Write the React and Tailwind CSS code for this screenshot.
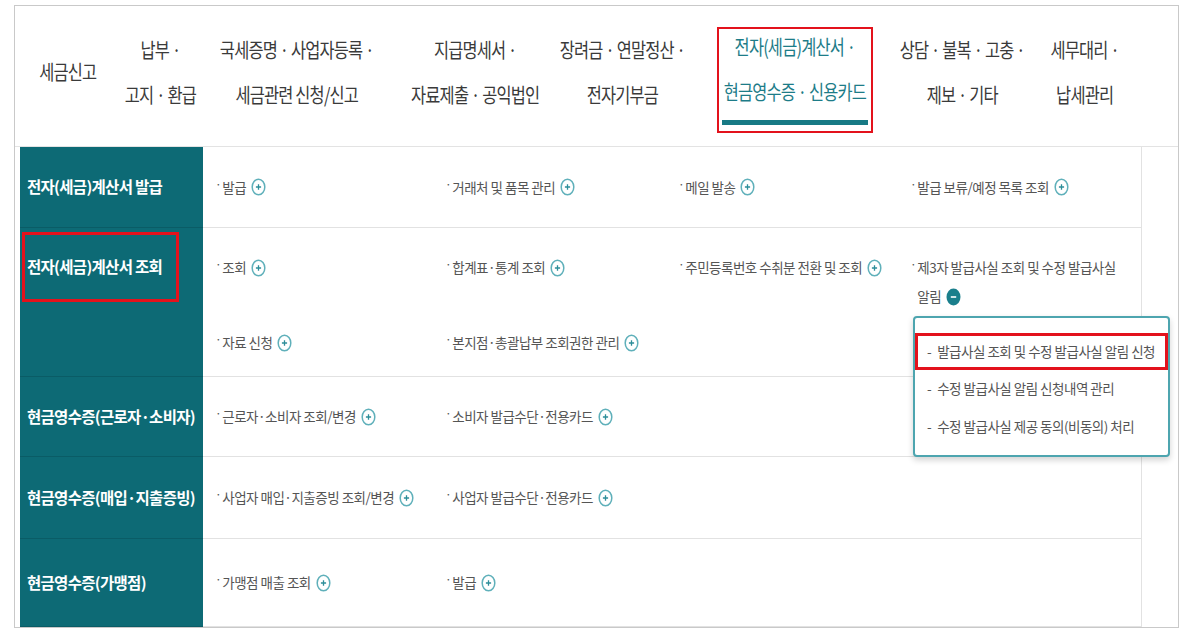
import React from "react";

const Plus = () => (
  <svg width="15" height="18" viewBox="0 0 15 18" className="ml-[5px] shrink-0">
    <ellipse cx="7.5" cy="9" rx="6.3" ry="7.8" fill="white" stroke="#5fb0ba" strokeWidth="1.5" />
    <path d="M7.5 6.2v5.6M4.9 9h5.2" stroke="#2c8d99" strokeWidth="1.3" />
  </svg>
);

const Minus = () => (
  <svg width="15" height="18" viewBox="0 0 15 18" className="ml-[5px] shrink-0">
    <ellipse cx="7.5" cy="9" rx="7" ry="8.5" fill="#1a7f8c" />
    <path d="M4.8 9h5.4" stroke="white" strokeWidth="1.6" />
  </svg>
);

const Item = ({ text }) => (
  <div className="flex items-center whitespace-nowrap text-[13.5px] leading-[29px] tracking-[-0.5px] text-[#555]">
    <span className="relative -top-[4px] mr-[1px] text-[12px]">·</span>
    <span>{text}</span>
    <Plus />
  </div>
);

const Label = ({ children }) => (
  <span className="whitespace-nowrap text-[15.5px] font-bold tracking-[-0.7px] text-white">{children}</span>
);

const headers = [
  { w: "w-[92px]", l: ["세금신고"] },
  { w: "w-[92px]", l: ["납부 ·", "고지 · 환급"] },
  { w: "w-[182px]", l: ["국세증명 · 사업자등록 ·", "세금관련 신청/신고"] },
  { w: "w-[174px]", l: ["지급명세서 ·", "자료제출 · 공익법인"] },
  { w: "w-[120px]", l: ["장려금 · 연말정산 ·", "전자기부금"] },
  { w: "w-[226px]", l: ["전자(세금)계산서 ·", "현금영수증 · 신용카드"], sel: true },
  { w: "w-[108px]", l: ["상담 · 불복 · 고충 ·", "제보 · 기타"] },
  { w: "w-[138px]", l: ["세무대리 ·", "납세관리"] },
];

const Row = ({ h, label, items }) => (
  <div className={`flex ${h}`}>
    <div className="flex w-[183px] items-center border-b border-[#0a5c66] bg-[#0d6a75] pl-[7px]">
      <Label>{label}</Label>
    </div>
    <div className="grid w-[939px] grid-cols-[230px_233px_232px_1fr] items-center border-b border-r border-[#e2e2e2] pl-[12px]">
      {items.map((t) => (
        <Item key={t} text={t} />
      ))}
    </div>
  </div>
);

export default function App() {
  return (
    <div className="h-[637px] w-[1188px] overflow-hidden bg-white font-['Noto_Sans_CJK_KR','Noto_Sans',sans-serif]">
      <div className="relative ml-[14px] mt-[5px] h-[623px] w-[1165px] border border-[#c9c9c9]">
        {/* header */}
        <div className="flex h-[141px] border-b border-[#e3e3e3] pl-[7px]">
          {headers.map((c, i) =>
            c.sel ? (
              <div key={i} className={`${c.w} flex justify-center pt-[21px]`}>
                <div className="flex h-[106px] w-[156px] flex-col items-center border-2 border-[#e3121c] pt-[5px]">
                  <div className="flex scale-x-[0.82] flex-col items-center gap-[20px] whitespace-nowrap text-[20px] leading-[25px] tracking-[-1px] text-[#1d7c88]">
                    <span>{c.l[0]}</span>
                    <span>{c.l[1]}</span>
                  </div>
                  <div className="mt-[16px] h-[5px] w-[146px] bg-[#177a85]" />
                </div>
              </div>
            ) : (
              <div key={i} className={`${c.w} flex flex-col items-center justify-center pb-[9px]`}>
                <div className="flex scale-x-[0.82] flex-col items-center gap-[20px] whitespace-nowrap text-[20px] leading-[25px] tracking-[-1px] text-[#3a3a3a]">
                  {c.l.map((t) => (
                    <span key={t}>{t}</span>
                  ))}
                </div>
              </div>
            )
          )}
        </div>

        {/* body */}
        <div className="flex flex-col pl-[5px]">
          <Row h="h-[81px]" label="전자(세금)계산서 발급" items={["발급", "거래처 및 품목 관리", "메일 발송", "발급 보류/예정 목록 조회"]} />

          <div className="flex h-[149px]">
            <div className="w-[183px] border-b border-[#0a5c66] bg-[#0d6a75] pt-[4px] pl-[2px]">
              <div className="flex h-[70px] w-[157px] items-center border-[3px] border-[#e3121c] pl-[2px]">
                <Label>전자(세금)계산서 조회</Label>
              </div>
            </div>
            <div className="flex w-[939px] flex-col border-b border-r border-[#e2e2e2] pl-[12px]">
              <div className="grid h-[75px] grid-cols-[230px_233px_232px_1fr] items-start pt-[25px]">
                <Item text="조회" />
                <Item text="합계표·통계 조회" />
                <Item text="주민등록번호 수취분 전환 및 조회" />
                <div className="flex text-[13.5px] leading-[29px] tracking-[-0.5px] text-[#555]">
                  <span className="relative -top-[4px] mr-[1px] text-[12px]">·</span>
                  <div className="flex flex-col whitespace-nowrap">
                    <span>제3자 발급사실 조회 및 수정 발급사실</span>
                    <span className="flex items-center">
                      알림
                      <Minus />
                    </span>
                  </div>
                </div>
              </div>
              <div className="grid h-[73px] grid-cols-[230px_233px_232px_1fr] items-start pt-[25px]">
                <Item text="자료 신청" />
                <Item text="본지점·총괄납부 조회권한 관리" />
              </div>
            </div>
          </div>

          <Row h="h-[80px]" label="현금영수증(근로자·소비자)" items={["근로자·소비자 조회/변경", "소비자 발급수단·전용카드"]} />
          <Row h="h-[82px]" label="현금영수증(매입·지출증빙)" items={["사업자 매입·지출증빙 조회/변경", "사업자 발급수단·전용카드"]} />
          <Row h="h-[88px]" label="현금영수증(가맹점)" items={["가맹점 매출 조회", "발급"]} />
        </div>

        {/* popup */}
        <div className="absolute left-[898px] top-[310px] h-[141px] w-[257px] rounded-[4px] border-2 border-[#4da5af] bg-white pt-[15px] shadow-[0_3px_6px_rgba(0,0,0,0.18)]">
          <div className="flex h-[37px] items-center whitespace-nowrap border-[3px] border-[#e3121c] pl-[9px] text-[13.5px] tracking-[-0.5px] text-[#555]">
            <span className="mr-[6px]">-</span>발급사실 조회 및 수정 발급사실 알림 신청
          </div>
          <div className="flex h-[36px] items-center whitespace-nowrap pl-[12px] text-[13.5px] tracking-[-0.5px] text-[#555]">
            <span className="mr-[6px]">-</span>수정 발급사실 알림 신청내역 관리
          </div>
          <div className="flex h-[40px] items-center whitespace-nowrap pl-[12px] text-[13.5px] tracking-[-0.5px] text-[#555]">
            <span className="mr-[6px]">-</span>수정 발급사실 제공 동의(비동의) 처리
          </div>
        </div>
      </div>
    </div>
  );
}
